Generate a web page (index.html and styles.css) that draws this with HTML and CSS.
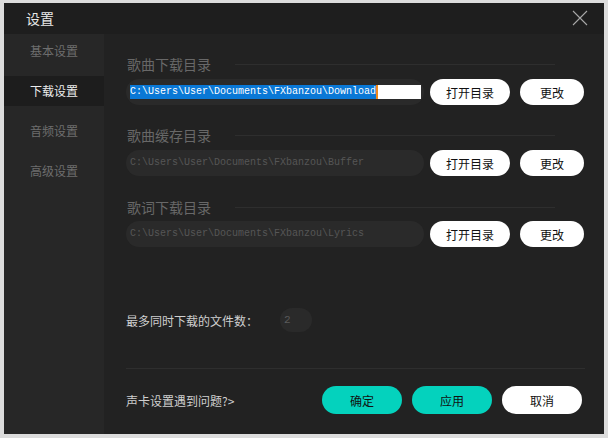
FILE: index.html
```html
<!DOCTYPE html>
<html lang="zh">
<head>
<meta charset="utf-8">
<title>设置</title>
<link rel="stylesheet" href="styles.css">
</head>
<body>
<div class="window">
  <div class="titlebar">
    <span class="title">设置</span>
    <svg class="close" width="16" height="16" viewBox="0 0 16 16"><path d="M1 1 L15 15 M15 1 L1 15" stroke="#a8a8a8" stroke-width="1.1" fill="none"/></svg>
  </div>
  <div class="body">
    <nav class="sidebar">
      <div class="nav-item">基本设置</div>
      <div class="nav-item active">下载设置</div>
      <div class="nav-item">音频设置</div>
      <div class="nav-item">高级设置</div>
    </nav>
    <main class="content">
      <section class="group">
        <div class="group-title"><span>歌曲下载目录</span><i class="rule"></i></div>
        <div class="row">
          <div class="field"><div class="field-inner active-field"><span class="sel">C:\Users\User\Documents\FXbanzou\Download</span><span class="caret"></span></div></div>
          <button class="btn btn-white btn-open">打开目录</button>
          <button class="btn btn-white btn-change">更改</button>
        </div>
      </section>
      <section class="group">
        <div class="group-title"><span>歌曲缓存目录</span><i class="rule"></i></div>
        <div class="row">
          <div class="field"><div class="field-inner">C:\Users\User\Documents\FXbanzou\Buffer</div></div>
          <button class="btn btn-white btn-open">打开目录</button>
          <button class="btn btn-white btn-change">更改</button>
        </div>
      </section>
      <section class="group">
        <div class="group-title"><span>歌词下载目录</span><i class="rule"></i></div>
        <div class="row">
          <div class="field"><div class="field-inner">C:\Users\User\Documents\FXbanzou\Lyrics</div></div>
          <button class="btn btn-white btn-open">打开目录</button>
          <button class="btn btn-white btn-change">更改</button>
        </div>
      </section>
      <div class="count-row">
        <span class="count-label">最多同时下载的文件数：</span>
        <span class="count-box">2</span>
      </div>
      <div class="divider"></div>
      <div class="footer">
        <span class="help">声卡设置遇到问题?&gt;</span>
        <div class="actions">
          <button class="btn btn-teal">确定</button>
          <button class="btn btn-teal">应用</button>
          <button class="btn btn-white">取消</button>
        </div>
      </div>
    </main>
  </div>
</div>
</body>
</html>
```
FILE: styles.css
```css
* { box-sizing: border-box; }
html, body { margin: 0; padding: 0; }
body {
  background: #dcdcdc;
  width: 608px;
  height: 438px;
  overflow: hidden;
  font-family: "Noto Sans CJK SC", "Noto Sans", sans-serif;
}
.window {
  margin: 3px 4px 0 4px;
  width: 600px;
  height: 431px;
  display: flex;
  flex-direction: column;
  background: #222222;
}
.titlebar {
  height: 31px;
  background: #1e1e1e;
  display: flex;
  align-items: center;
  justify-content: space-between;
  padding: 0 16px 0 22px;
}
.title {
  color: #e8e8e8;
  font-size: 14px;
  line-height: 20px;
  margin-top: -1px;
}
.close { display: block; margin-top: -1px; }
.body {
  flex: 1;
  display: flex;
}
.sidebar {
  width: 101px;
  background: #272727;
  padding-top: 2px;
  display: flex;
  flex-direction: column;
  gap: 10px;
}
.nav-item {
  height: 30px;
  line-height: 30px;
  padding-left: 26px;
  font-size: 12px;
  color: #6e6e6e;
}
.nav-item.active {
  background: #1d1d1d;
  color: #ececec;
}
.content {
  flex: 1;
  padding: 20px 19px 0 22px;
  display: flex;
  flex-direction: column;
}
.group { margin-bottom: 20px; }
.group:nth-child(2) { margin-bottom: 21px; }
.group-title {
  display: flex;
  align-items: center;
  height: 20px;
  padding-left: 1px;
  margin-bottom: 5px;
  font-size: 14px;
  color: #686868;
}
.group:nth-child(3) .group-title { margin-bottom: 4px; }
.rule {
  display: block;
  width: 320px;
  height: 1px;
  background: #2e2e2e;
  margin-left: 24px;
}
.row {
  display: flex;
  align-items: center;
  height: 26px;
}
.field {
  width: 298px;
  height: 26px;
  border-radius: 13px;
  background: #2a2a2a;
  padding: 6px 3px 6px 4px;
}
.field-inner {
  height: 14px;
  font-family: "Liberation Mono", "DejaVu Sans Mono", monospace;
  font-size: 10px;
  line-height: 14px;
  color: #565656;
  white-space: nowrap;
  overflow: hidden;
}
.active-field {
  background: #ffffff;
  display: flex;
  width: 291px;
}
.sel {
  background: #0a78d6;
  color: #ffffff;
}
.caret {
  width: 2px;
  height: 14px;
  background: #f08a1c;
}
.btn {
  border: 0;
  padding: 0;
  font-family: "Noto Sans CJK SC", "Noto Sans", sans-serif;
  font-size: 12px;
  color: #111;
  border-radius: 14px;
}
.btn-white { background: #ffffff; }
.btn-open {
  width: 80px;
  height: 26px;
  margin-left: 6px;
  border-radius: 13px;
}
.btn-change {
  width: 64px;
  height: 26px;
  margin-left: 10px;
  border-radius: 13px;
}
.count-row {
  margin-top: 41px;
  display: flex;
  align-items: center;
  height: 24px;
}
.count-label {
  font-size: 12px;
  color: #cfcfcf;
  width: 154px;
}
.count-box {
  width: 32px;
  height: 24px;
  border-radius: 12px;
  background: #2a2a2a;
  color: #5a5a5a;
  font-family: "Liberation Mono", "DejaVu Sans Mono", monospace;
  font-size: 11px;
  line-height: 24px;
  padding-left: 4px;
}
.divider {
  margin-top: 36px;
  height: 1px;
  background: #2e2e2e;
  width: 459px;
}
.footer {
  margin-top: 17px;
  display: flex;
  align-items: center;
  justify-content: space-between;
  height: 28px;
}
.help {
  font-size: 12px;
  color: #cfcfcf;
}
.actions {
  display: flex;
  gap: 10px;
  margin-right: 3px;
}
.actions .btn {
  width: 80px;
  height: 28px;
}
.btn-teal { background: #04d2bd; }
```
